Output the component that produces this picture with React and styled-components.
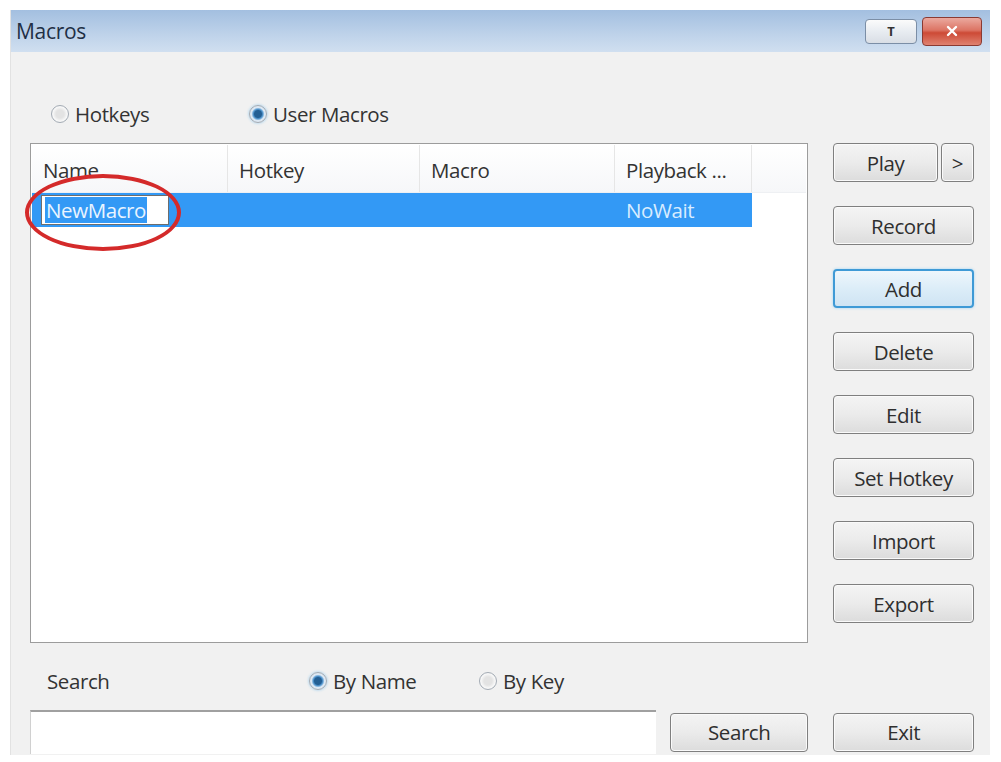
import React from "react";
import styled, { createGlobalStyle } from "styled-components";

const Global = createGlobalStyle`
  html, body {
    margin: 0;
    padding: 0;
    background: #ffffff;
  }
  body {
    font-family: "Open Sans", "Noto Sans", "DejaVu Sans", sans-serif;
    color: #2b2b2b;
  }
`;

const columns = [
  { label: "Name", width: 196 },
  { label: "Hotkey", width: 192 },
  { label: "Macro", width: 195 },
  { label: "Playback ...", width: 137 },
];

const sideButtons = ["Record", "Add", "Delete", "Edit", "Set Hotkey", "Import", "Export"];

export default function App() {
  return (
    <>
      <Global />
      <Page>
        <Window>
          <TitleBar>
            <Title>Macros</Title>
            <TitleButtons>
              <PinBtn>T</PinBtn>
              <CloseBtn>
                <svg width="16" height="14" viewBox="0 0 16 14">
                  <path d="M4 3 L12 11 M12 3 L4 11" stroke="#fff" strokeWidth="2.4" strokeLinecap="round" />
                </svg>
              </CloseBtn>
            </TitleButtons>
          </TitleBar>
          <Body>
            <RadioRow>
              <RadioLabel $w={198}>
                <Radio /> Hotkeys
              </RadioLabel>
              <RadioLabel>
                <Radio $checked /> User Macros
              </RadioLabel>
            </RadioRow>
            <Main>
              <ListBox>
                <Header>
                  {columns.map((c) => (
                    <HeaderCell key={c.label} $w={c.width}>
                      {c.label}
                    </HeaderCell>
                  ))}
                </Header>
                <SelectedRow>
                  <Cell $w={columns[0].width}>
                    <EditBox>
                      <Sel>NewMacro</Sel>
                    </EditBox>
                  </Cell>
                  <Cell $w={columns[1].width} />
                  <Cell $w={columns[2].width} />
                  <Cell $w={columns[3].width}>
                    <RowText>NoWait</RowText>
                  </Cell>
                </SelectedRow>
                <Ring />
              </ListBox>
              <ButtonColumn>
                <PlayRow>
                  <Btn $w={105}>Play</Btn>
                  <Btn $w={33}>&gt;</Btn>
                </PlayRow>
                {sideButtons.map((b) => (
                  <Btn key={b} $focused={b === "Add"}>
                    {b}
                  </Btn>
                ))}
              </ButtonColumn>
            </Main>
            <SearchRow>
              <SearchLabel>Search</SearchLabel>
              <RadioLabel $w={170}>
                <Radio $checked /> By Name
              </RadioLabel>
              <RadioLabel>
                <Radio /> By Key
              </RadioLabel>
            </SearchRow>
            <BottomRow>
              <SearchInput />
              <Btn $w={139}>Search</Btn>
              <Btn>Exit</Btn>
            </BottomRow>
          </Body>
        </Window>
      </Page>
    </>
  );
}

// css
const Page = styled.div`
  width: 1001px;
  height: 762px;
  padding: 10px 11px 7px 10px;
  box-sizing: border-box;
`;

const Window = styled.div`
  height: 100%;
  display: flex;
  flex-direction: column;
  background: #f1f1f1;
  border-left: 1px solid #e2e2e2;
`;

const TitleBar = styled.div`
  height: 42px;
  display: flex;
  align-items: center;
  justify-content: space-between;
  padding: 0 8px 0 5px;
  background: linear-gradient(#a3bfe0, #bfd3ea 60%, #d0dff0);
`;

const Title = styled.div`
  font-size: 21px;
  letter-spacing: -0.3px;
  color: #1f2f45;
`;

const TitleButtons = styled.div`
  display: flex;
  align-items: center;
  gap: 5px;
`;

const PinBtn = styled.div`
  width: 50px;
  height: 23px;
  border: 1px solid #7b8ea6;
  border-radius: 4px;
  background: linear-gradient(#fbfbfb, #e8ecf1 50%, #d9dee5);
  font-size: 13px;
  font-weight: bold;
  display: flex;
  align-items: center;
  justify-content: center;
  color: #333;
`;

const CloseBtn = styled.div`
  width: 58px;
  height: 27px;
  border: 1px solid #8a3a32;
  border-radius: 4px;
  background: linear-gradient(#eba99f, #dc7464 45%, #cd4a36 55%, #df8270);
  display: flex;
  align-items: center;
  justify-content: center;
`;

const Body = styled.div`
  flex: 1;
  display: flex;
  flex-direction: column;
  padding: 50px 16px 0 19px;
`;

const RadioRow = styled.div`
  display: flex;
  align-items: center;
  height: 24px;
  padding-left: 21px;
`;

const RadioLabel = styled.label`
  display: flex;
  align-items: center;
  gap: 6px;
  width: ${(p) => (p.$w ? `${p.$w}px` : "auto")};
  font-size: 20.5px;
  letter-spacing: -0.4px;
  color: #333;
`;

const Radio = styled.span`
  width: 16px;
  height: 16px;
  border-radius: 50%;
  border: 1px solid #a3abb4;
  background: ${(p) =>
    p.$checked
      ? "radial-gradient(circle, #235f94 0 3.5px, #5c9fd6 5px, #dde8f3 6.5px)"
      : "radial-gradient(circle, #e3e3e3 0 4px, #f7f7f7 7px)"};
  box-shadow: ${(p) => (p.$checked ? "0 0 3px #8ec6ec" : "none")};
`;

const Main = styled.div`
  display: flex;
  align-items: flex-start;
  gap: 25px;
  margin-top: 17px;
`;

const ListBox = styled.div`
  position: relative;
  width: 778px;
  height: 500px;
  box-sizing: border-box;
  background: #fff;
  border: 1px solid #9c9c9c;
  padding: 1px;
`;

const Header = styled.div`
  display: flex;
  height: 47px;
  background: linear-gradient(#ffffff, #f6f7f9);
  border-bottom: 1px solid #eef0f3;
`;

const HeaderCell = styled.div`
  width: ${(p) => p.$w}px;
  box-sizing: border-box;
  border-right: 1px solid #e6e6e6;
  display: flex;
  align-items: center;
  padding: 2px 11px 0;
  font-size: 20.5px;
  letter-spacing: -0.4px;
  color: #333;
`;

const SelectedRow = styled.div`
  display: flex;
  height: 34px;
  width: 720px;
  background: #3399f5;
`;

const Cell = styled.div`
  width: ${(p) => p.$w}px;
  display: flex;
  align-items: center;
  padding-left: 9px;
  box-sizing: border-box;
`;

const RowText = styled.span`
  font-size: 20.5px;
  letter-spacing: -0.4px;
  color: #d8ecff;
  padding-left: 2px;
`;

const EditBox = styled.div`
  width: 128px;
  height: 30px;
  box-sizing: border-box;
  background: #fff;
  border: 1px solid #6d6d6d;
  display: flex;
  align-items: center;
  padding-left: 3px;
`;

const Sel = styled.span`
  background: #3399f5;
  color: #e9f4ff;
  font-size: 20.5px;
  letter-spacing: -0.4px;
  line-height: 26px;
  padding: 0 1px;
`;

const Ring = styled.div`
  position: absolute;
  left: -6px;
  top: 30px;
  width: 156px;
  height: 77px;
  box-sizing: border-box;
  border: 4px solid #d42a2a;
  border-radius: 50%;
`;

const ButtonColumn = styled.div`
  width: 141px;
  display: flex;
  flex-direction: column;
  gap: 24px;
`;

const PlayRow = styled.div`
  display: flex;
  justify-content: space-between;
  height: 39px;
`;

const Btn = styled.div`
  width: ${(p) => (p.$w ? `${p.$w}px` : "141px")};
  height: 39px;
  box-sizing: border-box;
  border: ${(p) => (p.$focused ? "2px solid #3f9ad6" : "1px solid #7f7f7f")};
  border-radius: 4px;
  background: ${(p) =>
    p.$focused
      ? "linear-gradient(#eef6fc, #dcedf8 50%, #cfe4f3)"
      : "linear-gradient(#f4f4f4, #ebebeb 50%, #dcdcdc)"};
  box-shadow: ${(p) => (p.$focused ? "0 0 3px #9fd3f3" : "inset 0 0 0 1px #fafafa")};
  display: flex;
  align-items: center;
  justify-content: center;
  font-size: 20.5px;
  letter-spacing: -0.4px;
  color: #2f2f2f;
`;

const SearchRow = styled.div`
  display: flex;
  align-items: center;
  height: 28px;
  margin-top: 24px;
  padding-left: 17px;
`;

const SearchLabel = styled.div`
  width: 262px;
  font-size: 20.5px;
  letter-spacing: -0.4px;
  color: #333;
`;

const BottomRow = styled.div`
  display: flex;
  align-items: center;
  margin-top: 15px;
  gap: 12px;
`;

const SearchInput = styled.div`
  width: 628px;
  height: 44px;
  box-sizing: border-box;
  background: #fff;
  border-top: 2px solid #a0a0a0;
  border-left: 1px solid #d0d0d0;
  margin-right: 2px;
  & + div {
    margin-right: 13px;
  }
`;
